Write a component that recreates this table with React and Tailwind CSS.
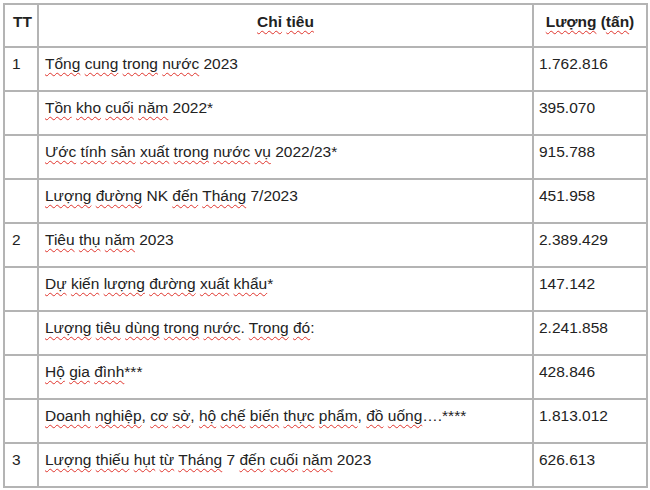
import React from "react";

const rows = [
  { tt: "1", label: "Tổng cung trong nước 2023", value: "1.762.816" },
  { tt: "", label: "Tồn kho cuối năm 2022*", value: "395.070" },
  { tt: "", label: "Ước tính sản xuất trong nước vụ 2022/23*", value: "915.788" },
  { tt: "", label: "Lượng đường NK đến Tháng 7/2023", value: "451.958" },
  { tt: "2", label: "Tiêu thụ năm 2023", value: "2.389.429" },
  { tt: "", label: "Dự kiến lượng đường xuất khẩu*", value: "147.142" },
  { tt: "", label: "Lượng tiêu dùng trong nước. Trong đó:", value: "2.241.858" },
  { tt: "", label: "Hộ gia đình***", value: "428.846" },
  { tt: "", label: "Doanh nghiệp, cơ sở, hộ chế biến thực phẩm, đồ uống….****", value: "1.813.012" },
  { tt: "3", label: "Lượng thiếu hụt từ Tháng 7 đến cuối năm 2023", value: "626.613" },
];

// spell-check style squiggle under each vietnamese word
function Squiggly({ text }) {
  const words = text.split(" ");
  return words.map((w, i) => {
    const m = w.match(/^([(]?)([A-Za-zÀ-ỹ]+)(.*)$/);
    const sep = i < words.length - 1 ? " " : "";
    if (!m || w === "NK") return <React.Fragment key={i}>{w + sep}</React.Fragment>;
    return (
      <React.Fragment key={i}>
        {m[1]}
        <span className="underline decoration-wavy decoration-[#e0342c] decoration-1 underline-offset-[3px]">
          {m[2]}
        </span>
        {m[3] + sep}
      </React.Fragment>
    );
  });
}

export default function App() {
  const cell = "border-2 border-[#b4b4b4] align-top";
  return (
    <div className="bg-white min-h-[490px] pt-[3px] pl-[3px]" style={{ fontFamily: '"Liberation Sans", Arial, sans-serif' }}>
      <table className="table-fixed border-collapse w-[643px] text-[15.5px] text-[#222]">
        <colgroup>
          <col className="w-[34px]" />
          <col className="w-[495px]" />
          <col className="w-[114px]" />
        </colgroup>
        <thead>
          <tr className="h-[43px]">
            <th className={`${cell} pt-[5px] pl-[8px] text-left font-bold`}>TT</th>
            <th className={`${cell} pt-[5px] text-center font-bold`}>
              <Squiggly text="Chỉ tiêu" />
            </th>
            <th className={`${cell} pt-[5px] text-center font-bold`}>
              <Squiggly text="Lượng (tấn)" />
            </th>
          </tr>
        </thead>
        <tbody>
          {rows.map((r, key) => (
            <tr key={key} className="h-[44px]">
              <td className={`${cell} pt-[4px] pl-[7px]`}>{r.tt}</td>
              <td className={`${cell} pt-[4px] pl-[6px]`}>
                <Squiggly text={r.label} />
              </td>
              <td className={`${cell} pt-[4px] pl-[5px]`}>{r.value}</td>
            </tr>
          ))}
        </tbody>
      </table>
    </div>
  );
}
